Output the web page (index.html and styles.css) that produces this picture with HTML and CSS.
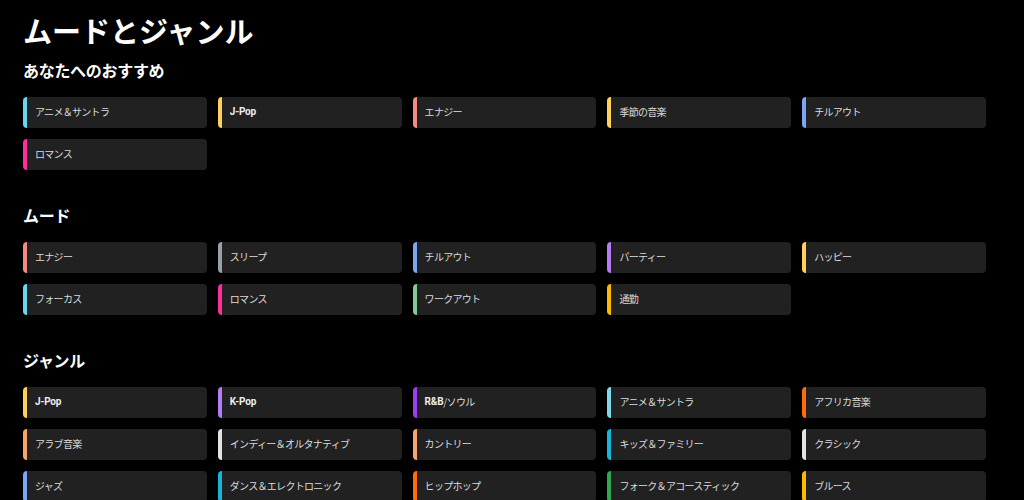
FILE: index.html
```html
<!DOCTYPE html>
<html lang="ja">
<head>
<meta charset="utf-8">
<title>ムードとジャンル</title>
<link rel="stylesheet" href="styles.css">
</head>
<body>
<main class="page">
  <h1 class="title">ムードとジャンル</h1>

  <section class="section">
    <h2 class="heading">あなたへのおすすめ</h2>
    <div class="grid">
      <a class="chip c-cyan">アニメ＆サントラ</a>
      <a class="chip c-yellow latin">J-Pop</a>
      <a class="chip c-salmon">エナジー</a>
      <a class="chip c-yellow">季節の音楽</a>
      <a class="chip c-blue">チルアウト</a>
      <a class="chip c-pink">ロマンス</a>
    </div>
  </section>

  <section class="section">
    <h2 class="heading">ムード</h2>
    <div class="grid">
      <a class="chip c-salmon">エナジー</a>
      <a class="chip c-grey">スリープ</a>
      <a class="chip c-blue">チルアウト</a>
      <a class="chip c-lavender">パーティー</a>
      <a class="chip c-yellow">ハッピー</a>
      <a class="chip c-cyan">フォーカス</a>
      <a class="chip c-pink">ロマンス</a>
      <a class="chip c-green">ワークアウト</a>
      <a class="chip c-amber">通勤</a>
    </div>
  </section>

  <section class="section">
    <h2 class="heading">ジャンル</h2>
    <div class="grid">
      <a class="chip c-yellow latin">J-Pop</a>
      <a class="chip c-lavender latin">K-Pop</a>
      <a class="chip c-purple"><b class="latin-b">R&amp;B</b>/ソウル</a>
      <a class="chip c-lightcyan">アニメ＆サントラ</a>
      <a class="chip c-orange">アフリカ音楽</a>
      <a class="chip c-peach">アラブ音楽</a>
      <a class="chip c-white">インディー＆オルタナティブ</a>
      <a class="chip c-peach">カントリー</a>
      <a class="chip c-teal">キッズ＆ファミリー</a>
      <a class="chip c-white">クラシック</a>
      <a class="chip c-blue">ジャズ</a>
      <a class="chip c-teal">ダンス＆エレクトロニック</a>
      <a class="chip c-orange">ヒップホップ</a>
      <a class="chip c-darkgreen">フォーク＆アコースティック</a>
      <a class="chip c-amber">ブルース</a>
    </div>
  </section>
</main>
</body>
</html>
```

FILE: styles.css
```css
html, body {
  margin: 0;
  padding: 0;
  background: #000;
  color: #fff;
  font-family: "Noto Sans CJK JP", "Noto Sans", sans-serif;
}

.page {
  padding: 12px 0 0 23px;
  width: 963px;
}

.title {
  margin: 0 0 12px;
  font-size: 29px;
  line-height: 36px;
  font-weight: 700;
  color: #fff;
}

.section + .section {
  margin-top: 35px;
}

.heading {
  margin: 0 0 17px;
  font-size: 16px;
  line-height: 20px;
  font-weight: 700;
  letter-spacing: -0.3px;
  color: #fff;
}

.grid {
  display: grid;
  grid-template-columns: repeat(5, 1fr);
  column-gap: 11px;
  row-gap: 11px;
}

.chip {
  display: flex;
  align-items: center;
  height: 31px;
  box-sizing: border-box;
  padding: 0 0 2px 8px;
  background: #212121;
  border-left: 4px solid #888;
  border-radius: 4px;
  font-size: 10px;
  letter-spacing: -0.7px;
  color: #dcdcdc;
  white-space: nowrap;
}

.chip.latin,
.latin-b {
  font-family: "Roboto", "Noto Sans CJK JP", sans-serif;
  font-weight: 700;
  letter-spacing: -0.2px;
  color: #eee;
}

.c-cyan { border-left-color: #6cd4ef; }
.c-lightcyan { border-left-color: #7fd8ea; }
.c-yellow { border-left-color: #ffd15c; }
.c-salmon { border-left-color: #f28b82; }
.c-blue { border-left-color: #7ca6f5; }
.c-pink { border-left-color: #ff2e9a; }
.c-grey { border-left-color: #9aa0a6; }
.c-lavender { border-left-color: #b57cf5; }
.c-purple { border-left-color: #9b3ff0; }
.c-green { border-left-color: #81c995; }
.c-darkgreen { border-left-color: #2fa84f; }
.c-amber { border-left-color: #ffb800; }
.c-orange { border-left-color: #ff6d0a; }
.c-peach { border-left-color: #f8a46a; }
.c-white { border-left-color: #e3e3e3; }
.c-teal { border-left-color: #1ab3d9; }
```
